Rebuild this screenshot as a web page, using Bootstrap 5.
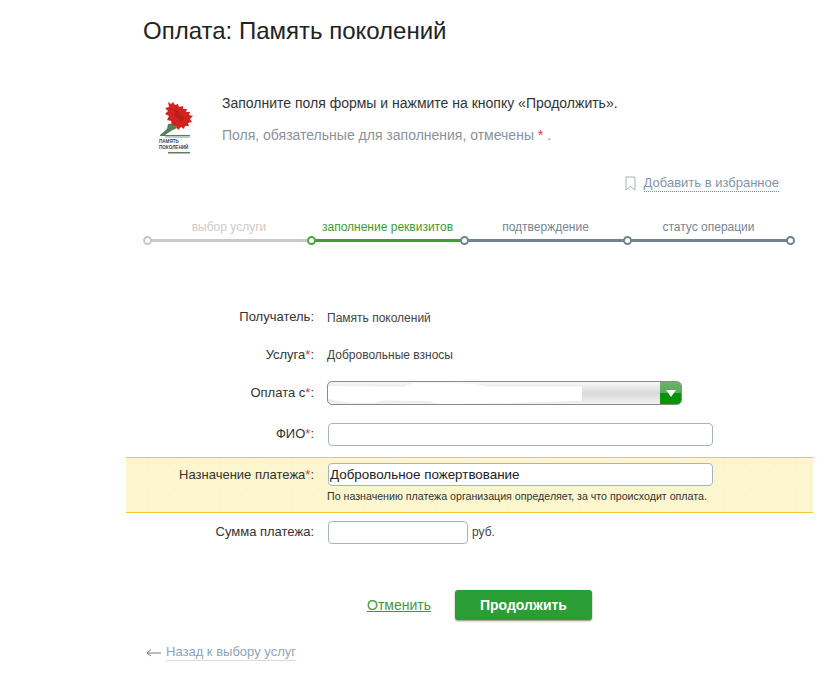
<!DOCTYPE html>
<html lang="ru"><head><meta charset="utf-8"><title>Оплата</title>
<link rel="stylesheet" href="https://cdn.jsdelivr.net/npm/bootstrap@5.3.0/dist/css/bootstrap.min.css">
<style>
body{font-family:"Liberation Sans",Arial,sans-serif;color:#333;background:#fff;font-size:13px;line-height:16px;overflow:hidden}
.pay-page{width:813px;height:675px;padding:0 0 0 126px}
.pay-title{font-size:24px;line-height:26px;font-weight:400;color:#222;margin:18px 0 0 17px}
.intro-block{margin:50px 0 0 17px;height:80px}
.intro-logo{width:63px;flex:none;margin-top:4px;padding-left:14px}
.intro-main{font-size:14px;line-height:18px;color:#333;margin:0}
.intro-note{font-size:14px;line-height:18px;color:#8a939b;margin:14px 0 0}
.intro-note i{color:#e5352c;font-style:normal}
.fav-row{margin-right:34px;height:18px}
.fav-link{font-size:13px;line-height:16px;color:#7d96a5;border-bottom:1px dotted #5e9a96;text-decoration:none}
.steps-bar{margin:27px 0 0 17px;width:652px;height:28px}
.step-item{flex:none;position:relative;text-align:center;font-size:12px;line-height:14px;height:28px;padding:1px 0 0 8px}
.step-line{position:absolute;left:4px;right:-4px;height:3px;top:20px}
.step-dot{position:absolute;left:0;top:17px;width:9px;height:9px;border-radius:50%;background:#fff;border:2px solid;z-index:2}
.step-end{left:auto;right:-9px}
.step-a{width:164px;color:#cfcac8}.step-a .step-line{background:#c9c9c9}.step-a .step-dot{border-color:#c9c6c3}
.step-b{width:153px;color:#3f9a36}.step-b .step-line{background:#409c33}.step-b .step-dot{border-color:#4fa344}
.step-c{width:163px;color:#78858e}.step-c .step-line{background:#6f8391}.step-c .step-dot{border-color:#6f8391}
.step-d{width:163px;color:#78858e}.step-d .step-line{background:#6f8391}.step-d .step-dot{border-color:#6f8391}
.pay-form{margin-top:51px}
.form-line{display:flex;align-items:center}
.form-lab{width:188px;flex:none;text-align:right;font-size:13px;color:#333}
.form-lab i{color:#e5352c;font-style:normal}
.form-val{margin-left:13px;font-size:12px;color:#444}
.val-low{margin-top:2px}
.val-field{margin-left:14px}
.line-static{height:38px}
.line-fio{margin-top:3px}
.fake-select{display:flex;width:355px;height:24px;margin-left:-1px;border:1px solid #8a8a8a;border-radius:5px;overflow:hidden;background:linear-gradient(#f8f8f8,#d9d9d9 50%,#f2f2f2)}
.select-mask{width:254px;background:#fff;clip-path:polygon(0 18%,30% 20%,34% 4%,58% 8%,62% 20%,100% 20%,100% 85%,70% 96%,44% 100%,40% 88%,22% 84%,18% 94%,8% 94%,0 78%)}
.select-arrow{margin-left:auto;width:21px;background:linear-gradient(#6bb36b 0,#5aa95a 48%,#0a9309 50%,#0a9309);display:flex;align-items:center;justify-content:center}
.fake-input{display:block;height:23px;border:1px solid #a4b4c6;border-radius:4px;background:#fff;padding:0 1px;font-family:"Liberation Sans",Arial,sans-serif;font-size:13.4px;color:#222;outline:0}
.input-wide{width:385px}
.input-sum{width:140px}
.hl-band{background-color:#fbf6cd;background-image:radial-gradient(#f2f4c8 1px,transparent 1px);background-size:9px 9px;border-top:1px solid #f2c832;border-bottom:1px solid #f2c832;padding:5px 0 7px;margin-top:4px;height:56px}
.hl-hint{font-size:10.65px;line-height:12px;color:#333;margin:4px 0 0 201px}
.actions-line{margin:39px 0 0;padding-left:241px;height:30px}
.cancel-link{font-size:14px;color:#3d9b35;text-decoration:underline}
.go-btn{width:137px;height:30px;margin-left:24px;padding:0;border:0;border-radius:3px;background:#2a9e34;color:#fff;font-weight:700;font-size:14px;box-shadow:0 1px 2px rgba(0,0,0,.45)}
.go-btn:hover{background:#2a9e34;color:#fff}
.back-line{margin:24px 0 0 20px}
.back-link{font-size:13px;color:#8ea5b5;text-decoration:none;border-bottom:1px solid #d5dde2;margin-left:5px}
</style></head><body>
<div class="pay-page">
<h1 class="pay-title">Оплата: Память поколений</h1>
<div class="intro-block d-flex">
 <div class="intro-logo">
 <svg width="36" height="58" viewBox="0 0 36 58"><path d="M3 37 L10 31 L11 26 L18 25 L20 30 L14 33 L8 37Z" fill="#55805c"/><path d="M11 4 L14 6 L16 4 L18 7 L21 6 L22 9 L26 8 L26 11 L30 11 L29 14 L33 14 L32 17 L36 18 L33 21 L35 24 L31 25 L32 28 L28 28 L27 31 L24 29 L21 32 L19 28 L15 27 L14 23 L10 22 L12 18 L8 16 L11 13 L8 10 L12 9Z" fill="#d2241f"/><path d="M15 10 L20 12 L24 17 L28 20 L24 24 L21 20 L17 18 L18 14Z" fill="#b81e1a"/><rect x="3" y="37" width="30" height="1" fill="#55805c"/><rect x="8" y="38.500" width="25" height="1" fill="#7d9a82"/><text x="2" y="45" font-size="4.600" font-weight="700" fill="#444" font-family="Liberation Sans">ПАМЯТЬ</text><text x="2" y="51" font-size="4.600" font-weight="700" fill="#444" font-family="Liberation Sans">ПОКОЛЕНИЙ</text><rect x="11" y="54" width="22" height="1.500" fill="#5d8065"/></svg>
 </div>
 <div class="ms-3"><p class="intro-main">Заполните поля формы и нажмите на кнопку «Продолжить».</p>
 <p class="intro-note">Поля, обязательные для заполнения, отмечены <i>*</i> .</p></div>
</div>
<div class="fav-row d-flex justify-content-end align-items-center">
 <svg width="11" height="15" viewBox="0 0 11 15" class="me-2" fill="none" stroke="#a9b2b6"><path d="M1 1H10V14L5.500 10.500 1 14Z"/></svg>
 <a class="fav-link" href="#">Добавить в избранное</a>
</div>
<div class="steps-bar d-flex">
 <div class="step-item step-a">выбор услуги<span class="step-line"></span><span class="step-dot"></span></div>
 <div class="step-item step-b">заполнение реквизитов<span class="step-line"></span><span class="step-dot"></span></div>
 <div class="step-item step-c">подтверждение<span class="step-line"></span><span class="step-dot"></span></div>
 <div class="step-item step-d">статус операции<span class="step-line"></span><span class="step-dot"></span><span class="step-dot step-end"></span></div>
</div>
<div class="pay-form">
 <div class="form-line line-static"><div class="form-lab">Получатель:</div><div class="form-val val-low">Память поколений</div></div>
 <div class="form-line line-static"><div class="form-lab">Услуга<i>*</i>:</div><div class="form-val">Добровольные взносы</div></div>
 <div class="form-line line-static"><div class="form-lab">Оплата с<i>*</i>:</div><div class="form-val val-field"><div class="fake-select"><span class="select-mask"></span><span class="select-arrow"><svg width="10" height="7" viewBox="0 0 10 7"><path d="M0 0H10L5 7Z" fill="#fff"/></svg></span></div></div></div>
 <div class="form-line line-static line-fio"><div class="form-lab">ФИО<i>*</i>:</div><div class="form-val val-field"><input class="fake-input input-wide" type="text" aria-label="ФИО"></div></div>
 <div class="hl-band">
  <div class="form-line"><div class="form-lab">Назначение платежа<i>*</i>:</div><div class="form-val val-field"><input class="fake-input input-wide" type="text" value="Добровольное пожертвование" aria-label="Назначение"></div></div>
  <div class="hl-hint">По назначению платежа организация определяет, за что происходит оплата.</div>
 </div>
 <div class="form-line line-static"><div class="form-lab">Сумма платежа:</div><div class="form-val val-field d-flex align-items-center"><input class="fake-input input-sum" type="text" aria-label="Сумма"><span class="ms-1">руб.</span></div></div>
</div>
<div class="actions-line d-flex align-items-center"><a class="cancel-link" href="#">Отменить</a><button class="btn go-btn" type="button">Продолжить</button></div>
<div class="back-line d-flex align-items-center">
 <svg width="15" height="9" viewBox="0 0 15 9" fill="none" stroke="#777"><path d="M15 5H1M5 1.500L1 5 5 8"/></svg>
 <a class="back-link" href="#">Назад к выбору услуг</a>
</div>
</div>
</body></html>
